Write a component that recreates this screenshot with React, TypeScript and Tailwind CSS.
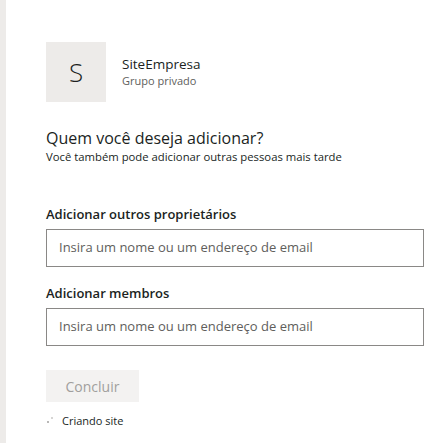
const font = { fontFamily: '"Open Sans", "Noto Sans", sans-serif' }

function PeopleField({ label }: { label: string }) {
  return (
    <div className="flex flex-col">
      <label className="text-[13px] font-semibold text-[#201f1e] leading-[20px] mb-[5px]">{label}</label>
      <div className="h-[38px] w-[378px] border border-[#8a8886] flex items-center px-[12px]">
        <span className="text-[13px] text-[#605e5c]">Insira um nome ou um endereço de email</span>
      </div>
    </div>
  )
}

export default function App() {
  return (
    <div className="flex w-[441px] h-[443px] bg-white overflow-hidden" style={font}>
      <div className="w-[6px] h-full bg-[#edebe9]" />
      <div className="flex flex-col pl-[40px] pt-[42px]">
        <div className="flex items-start gap-[16px]">
          <div className="w-[60px] h-[60px] bg-[#edebe9] flex items-center justify-center text-[26px] font-light text-[#201f1e]">
            S
          </div>
          <div className="flex flex-col pt-[13px]">
            <span className="text-[13.5px] leading-[18px] text-[#201f1e]">SiteEmpresa</span>
            <span className="text-[11px] leading-[16px] text-[#605e5c]">Grupo privado</span>
          </div>
        </div>

        <div className="mt-[24px] flex flex-col">
          <h2 className="text-[16px] leading-[24px] text-[#201f1e]">Quem você deseja adicionar?</h2>
          <p className="text-[11.3px] leading-[14px] text-[#201f1e]">Você também pode adicionar outras pessoas mais tarde</p>
        </div>

        <div className="mt-[40px] flex flex-col gap-[16px]">
          <PeopleField label="Adicionar outros proprietários" />
          <PeopleField label="Adicionar membros" />
        </div>

        <button
          disabled
          className="mt-[24px] w-[93px] h-[32px] bg-[#f3f2f1] text-[#a19f9d] text-[14px]"
        >
          Concluir
        </button>

        <div className="mt-[11px] flex items-center gap-[9px]">
          <svg width="6" height="6" viewBox="0 0 6 6" className="ml-[1px] -mt-[3px]">
            <circle cx="1" cy="5" r="0.8" fill="#605e5c" />
            <circle cx="5" cy="1" r="0.8" fill="#a19f9d" />
          </svg>
          <span className="text-[11px] text-[#201f1e]">Criando site</span>
        </div>
      </div>
    </div>
  )
}
